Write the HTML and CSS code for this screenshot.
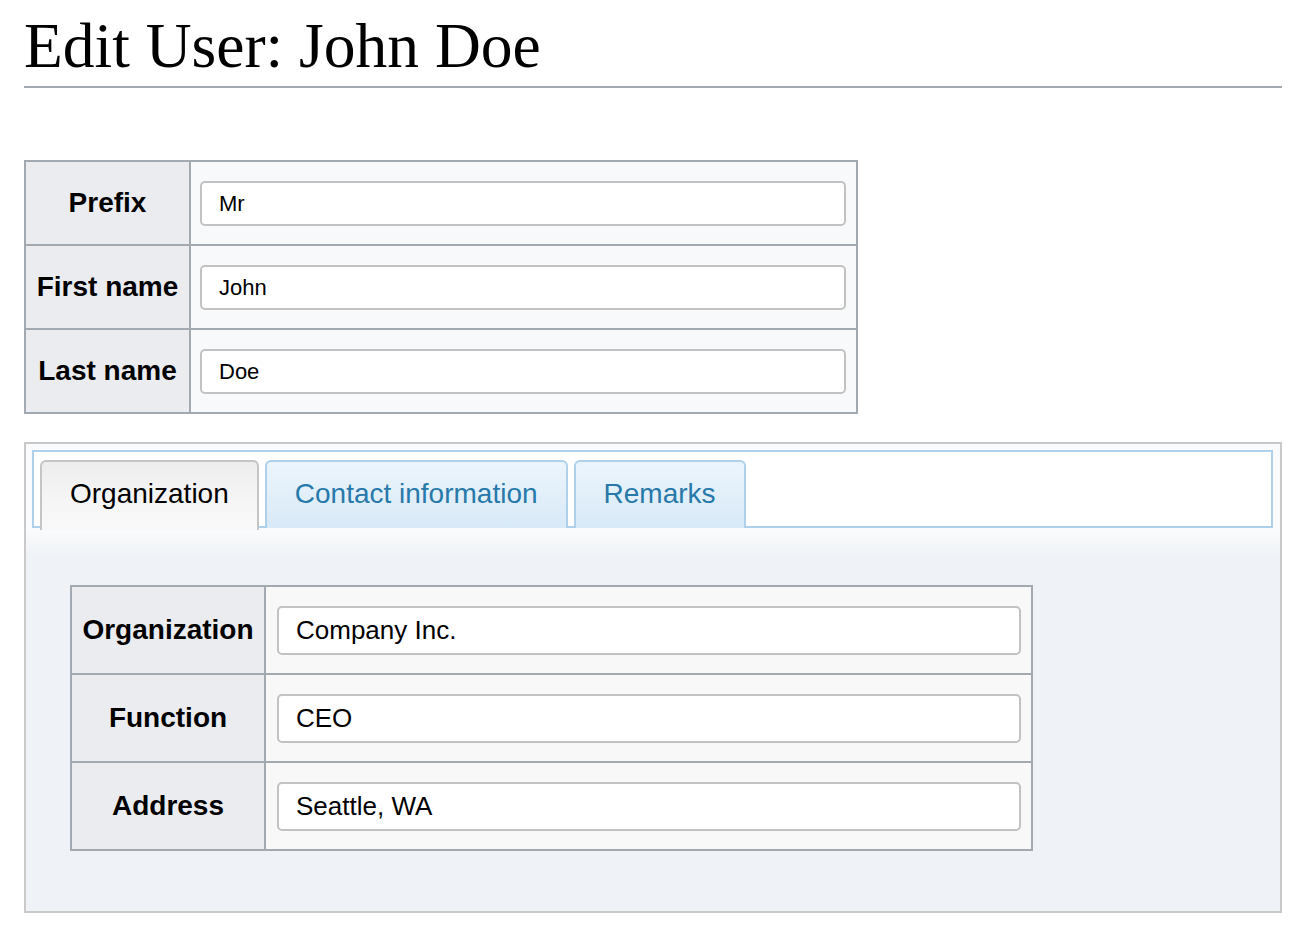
FILE: index.html
```html
<!DOCTYPE html>
<html lang="en">
<head>
<meta charset="utf-8">
<title>Edit User: John Doe</title>
<link rel="stylesheet" href="styles.css">
</head>
<body>
  <h1 class="page-title">Edit User: John Doe</h1>

  <div class="form-grid name-grid">
    <div class="label-cell">Prefix</div>
    <div class="field-cell"><input class="text-input" type="text" value="Mr"></div>
    <div class="label-cell">First name</div>
    <div class="field-cell"><input class="text-input" type="text" value="John"></div>
    <div class="label-cell last">Last name</div>
    <div class="field-cell last"><input class="text-input" type="text" value="Doe"></div>
  </div>

  <div class="tabs">
    <ul class="tab-nav">
      <li class="tab active">Organization</li>
      <li class="tab">Contact information</li>
      <li class="tab">Remarks</li>
    </ul>
    <div class="tab-panel">
      <div class="form-grid org-grid">
        <div class="label-cell">Organization</div>
        <div class="field-cell"><input class="text-input big" type="text" value="Company Inc."></div>
        <div class="label-cell">Function</div>
        <div class="field-cell"><input class="text-input big" type="text" value="CEO"></div>
        <div class="label-cell last">Address</div>
        <div class="field-cell last"><input class="text-input big" type="text" value="Seattle, WA"></div>
      </div>
    </div>
  </div>
</body>
</html>
```

FILE: styles.css
```css
* { box-sizing: border-box; }

html, body { background: #ffffff; }

body {
  margin: 0;
  padding: 0 18px 0 24px;
  font-family: "Liberation Sans", Arial, sans-serif;
  color: #000;
}

.page-title {
  margin: 0;
  padding-top: 16px;
  padding-bottom: 10px;
  font-family: "Liberation Serif", "Times New Roman", serif;
  font-weight: normal;
  font-size: 63.5px;
  line-height: 60px;
  border-bottom: 2px solid #a2a9b1;
}

.form-grid {
  display: grid;
  border: 2px solid #a2a9b1;
}

.name-grid {
  margin-top: 72px;
  width: 834px;
  grid-template-columns: 165px 665px;
}

.label-cell {
  display: flex;
  align-items: center;
  justify-content: center;
  background: #eaecf0;
  font-weight: bold;
  font-size: 28px;
  border-right: 2px solid #a2a9b1;
  border-bottom: 2px solid #a2a9b1;
  white-space: nowrap;
}

.field-cell {
  display: flex;
  align-items: center;
  background: #f8f9fa;
  border-bottom: 2px solid #a2a9b1;
}

.label-cell.last, .field-cell.last { border-bottom: none; }

.name-grid .label-cell,
.name-grid .field-cell { height: 84px; }
.name-grid .label-cell.last,
.name-grid .field-cell.last { height: 82px; }

.name-grid .field-cell { padding: 0 10px 0 9px; }

.text-input {
  display: block;
  width: 100%;
  height: 45px;
  margin: 0;
  padding: 2px 0 0 17px;
  border: 2px solid #c2c2c2;
  border-radius: 5px;
  background: #fff;
  font-family: "Liberation Sans", Arial, sans-serif;
  font-size: 22px;
  color: #000;
  outline: none;
}

.text-input.big {
  height: 49px;
  font-size: 26px;
  padding: 0 0 0 17px;
}

.tabs {
  margin-top: 28px;
  border: 2px solid #c9c9c9;
  padding: 6px 7px 0 6px;
  background: linear-gradient(to bottom, #fafbfc 0px, #fafbfc 86px, #eff3f7 112px, #eff3f7 100%);
  height: 471px;
}

.tab-nav {
  display: flex;
  gap: 6px;
  list-style: none;
  margin: 0;
  padding: 8px 6px 0 6px;
  height: 78px;
  background: #fff;
  border: 2px solid #aed0ea;
}

.tab {
  height: 68px;
  padding: 0 28px 2px 28px;
  display: flex;
  align-items: center;
  font-size: 28px;
  color: #2779aa;
  border: 2px solid #aed0ea;
  border-bottom: none;
  border-radius: 6px 6px 0 0;
  background: linear-gradient(to bottom, #ecf5fc 0%, #d8e9f7 100%);
  white-space: nowrap;
}

.tab.active {
  color: #000;
  border-color: #c5c5c5;
  height: 70px;
  margin-bottom: -2px;
  padding: 0 28px 4px 28px;
  background: linear-gradient(to bottom, #ededed 0%, #f6f6f6 60%, #f9f9f9 100%);
}

.tab-panel {
  padding: 57px 0 0 38px;
}

.org-grid {
  width: 963px;
  grid-template-columns: 194px 765px;
}

.org-grid .label-cell,
.org-grid .field-cell { height: 88px; }
.org-grid .label-cell.last,
.org-grid .field-cell.last { height: 86px; }

.org-grid .label-cell { padding: 0 8px; }
.org-grid .field-cell {
  padding: 0 10px 0 11px;
  background: #f8f8f8;
}
```
